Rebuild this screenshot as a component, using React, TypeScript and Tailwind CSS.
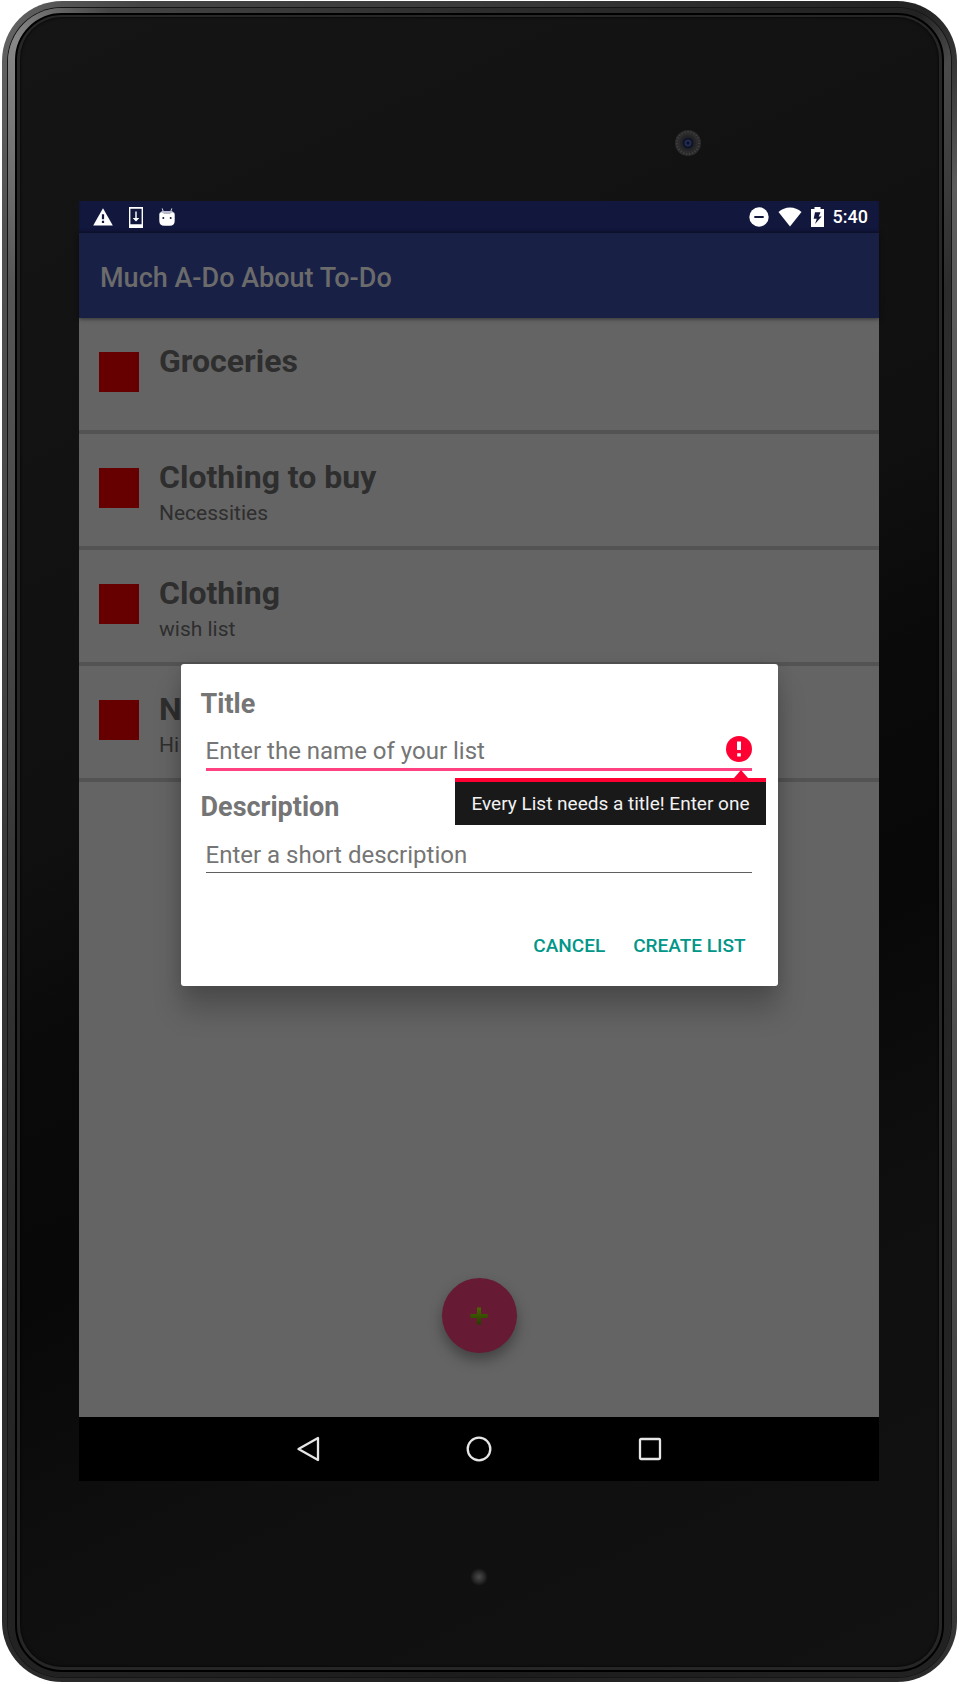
import React from "react";

type TodoList = { id: number; title: string; description: string };

const lists: TodoList[] = [
  { id: 1, title: "Groceries", description: "" },
  { id: 2, title: "Clothing to buy", description: "Necessities" },
  { id: 3, title: "Clothing", description: "wish list" },
  { id: 4, title: "N", description: "Hi" },
];

function WarningIcon() {
  return (
    <svg width="20" height="18" viewBox="0 0 20 18" aria-hidden="true">
      <path d="M10 .3 19.8 17.6H.2Z" fill="#fff" />
      <path d="M8.9 6.2h2.2v5H8.9zM8.9 12.8h2.2v2.2H8.9z" fill="#12183d" />
    </svg>
  );
}

function DownloadIcon() {
  return (
    <svg width="14" height="21" viewBox="0 0 14 21" aria-hidden="true">
      <path fillRule="evenodd" d="M0 0h14v21H0zM1.4 1.7v15.5h11.2V1.7z" fill="#fff" />
      <path d="M6.3 4.5h1.4v6.6h2.6L7 14.6l-3.3-3.5h2.6z" fill="#fff" />
    </svg>
  );
}

function AndroidIcon() {
  return (
    <svg width="16" height="18" viewBox="0 0 16 18" aria-hidden="true">
      <path d="M3.2.4 4.4 4M12.8.4 11.6 4" stroke="#d5d6e2" strokeWidth="1" />
      <path d="M2.6 3h10.8l1 2.4H1.6z" fill="#b9bbcf" />
      <path d="M.3 6.2Q.5 4 2.5 4.4q5.5 2.4 11 0 2-.4 2.2 1.8v6.6q0 5-5 5H5.3q-5 0-5-5z" fill="#fff" />
      <circle cx="4.3" cy="10" r="1" fill="#12183d" />
      <circle cx="11.7" cy="10" r="1" fill="#12183d" />
    </svg>
  );
}

function DoNotDisturbIcon() {
  return (
    <svg width="20" height="20" viewBox="0 0 20 20" aria-hidden="true">
      <circle cx="10" cy="10" r="9.7" fill="#fff" />
      <path d="M5.3 9h9.4v2H5.3z" fill="#12183d" />
    </svg>
  );
}

function WifiIcon() {
  return (
    <svg width="24" height="20" viewBox="0 0 24 20" aria-hidden="true">
      <path d="M.5 5Q5.5.5 12 .5T23.5 5L12 19.5Z" fill="#fff" />
    </svg>
  );
}

function BatteryIcon() {
  return (
    <svg width="13" height="20" viewBox="0 0 13 20" aria-hidden="true">
      <path d="M3.5 0h6v2H13v18H0V2h3.5z" fill="#fff" />
      <path d="M4 5.3h5.5L7.7 9.4h2.9L4 17l1.8-5.2H2.7z" fill="#12183d" />
    </svg>
  );
}

function StatusBar() {
  return (
    <div className="flex h-8 items-center justify-between bg-[#12183d] pr-[11px] pl-[14px] shadow-[inset_0_-2px_2px_rgba(0,0,0,0.2)]">
      <div className="flex items-center gap-4">
        <WarningIcon />
        <DownloadIcon />
        <AndroidIcon />
      </div>
      <div className="flex items-center gap-[9px] text-lg leading-8 font-medium text-white">
        <DoNotDisturbIcon />
        <WifiIcon />
        <BatteryIcon />
        <span>5:40</span>
      </div>
    </div>
  );
}

function ListRow({ item }: { item: TodoList }) {
  return (
    <li className="flex min-h-[116px] items-start gap-5 border-b-4 border-[#535353] px-5">
      <span className="mt-[34px] size-10 shrink-0 bg-[#660000]" />
      <div className="pt-[23px] text-[#2e2e2e]">
        <h2 className="text-[32px] leading-10 font-bold">{item.title}</h2>
        <p className="text-[21px] leading-8">{item.description}</p>
      </div>
    </li>
  );
}

function ErrorHint() {
  return (
    <div id="title-error" role="alert" className="absolute top-[43px] -right-[14px] border-t-4 border-[#ff0033] bg-[#191919] px-4 pt-px text-[19px] leading-[42px] whitespace-nowrap text-[#f2f2f2]">
      <svg className="absolute right-[18px] bottom-full mb-1" width="14" height="8" viewBox="0 0 14 8" aria-hidden="true">
        <path d="M7 0 14 8H0Z" fill="#ff0033" />
      </svg>
      Every List needs a title! Enter one
    </div>
  );
}

function CreateListDialog() {
  return (
    <form
      role="dialog"
      aria-label="Create list"
      onSubmit={(e) => e.preventDefault()}
      className="w-3/4 max-w-[597px] min-w-[480px] rounded-[3px] bg-white px-5 pt-6 pb-4 shadow-[0_24px_28px_rgba(0,0,0,0.22),0_2px_16px_rgba(0,0,0,0.12)]"
    >
      <label htmlFor="title" className="block text-[27px] leading-8 font-bold text-[#757575]">Title</label>
      <div className="relative mr-[6px] ml-[5px] mt-[15px]">
        <input
          id="title"
          aria-describedby="title-error"
          aria-invalid="true"
          placeholder="Enter the name of your list"
          className="block w-full border-b-3 border-[#ff4081] pr-9 pb-px text-2xl leading-8 text-[#212121] outline-none placeholder:text-[#757575]"
        />
        <svg className="absolute top-px right-0" width="26" height="26" viewBox="0 0 26 26" aria-hidden="true">
          <circle cx="13" cy="13" r="13" fill="#ff0033" />
          <path d="M11 5.5h4v8.6h-4zM11.2 17.2h3.6v3.4h-3.6z" fill="#fff" />
        </svg>
        <ErrorHint />
      </div>
      <label htmlFor="description" className="mt-5 block text-[27px] leading-8 font-bold text-[#757575]">Description</label>
      <div className="mt-4 mr-[6px] ml-[5px]">
        <input
          id="description"
          placeholder="Enter a short description"
          className="block w-full border-b border-[#5f5f5f] pb-px text-2xl leading-8 text-[#212121] outline-none placeholder:text-[#757575]"
        />
      </div>
      <div className="mt-[49px] flex justify-end gap-1 text-[19px] leading-6 font-medium text-[#009688]">
        <button type="button" className="h-12 px-3">CANCEL</button>
        <button type="submit" className="h-12 px-3">CREATE LIST</button>
      </div>
    </form>
  );
}

function NavigationBar() {
  return (
    <nav className="flex h-16 justify-center bg-black">
      <button aria-label="Back" className="flex w-[171px] items-center justify-center">
        <svg width="24" height="26" viewBox="0 0 24 26" fill="none" stroke="#e6e6e6" strokeWidth="2.3" strokeLinejoin="round" aria-hidden="true">
          <path d="M22 2v22L2.500 13Z" />
        </svg>
      </button>
      <button aria-label="Home" className="flex w-[171px] items-center justify-center">
        <svg width="26" height="26" viewBox="0 0 26 26" fill="none" stroke="#e6e6e6" strokeWidth="2.3" aria-hidden="true">
          <circle cx="13" cy="13" r="11.3" />
        </svg>
      </button>
      <button aria-label="Recent apps" className="flex w-[171px] items-center justify-center">
        <svg width="24" height="24" viewBox="0 0 24 24" fill="none" stroke="#e6e6e6" strokeWidth="2.3" aria-hidden="true">
          <rect x="2" y="2" width="20" height="20" rx="1" />
        </svg>
      </button>
    </nav>
  );
}

function Camera() {
  return (
    <svg width="28" height="28" viewBox="0 0 28 28" aria-hidden="true">
      <circle cx="14" cy="14" r="13" fill="#2b2b2b" />
      <circle cx="14" cy="14" r="11" fill="none" stroke="#444" strokeWidth="2" strokeDasharray="1 2" />
      <circle cx="14" cy="14" r="8" fill="#222429" />
      <circle cx="14" cy="14" r="5.5" fill="#11141c" />
      <circle cx="14" cy="14" r="3.5" fill="#202b58" />
      <circle cx="14" cy="14" r="1.5" fill="#0c1020" />
    </svg>
  );
}

function Screen() {
  return (
    <main className="relative flex min-h-[1280px] flex-col bg-[#646464]">
      <StatusBar />
      <header className="z-10 flex h-[85px] items-center bg-[#192046] px-[21px] pt-1 text-[27px] leading-8 font-medium text-[#6b6b6b] shadow-[0_1px_4px_rgba(0,0,0,0.5)]">
        <h1>Much A-Do About To-Do</h1>
      </header>
      <ul>
        {lists.map((item) => (
          <ListRow key={item.id} item={item} />
        ))}
      </ul>
      <div className="mt-auto flex justify-center pb-16">
        <button aria-label="Add list" className="flex size-[75px] items-center justify-center rounded-full bg-[#661a34] shadow-[0_7px_14px_rgba(0,0,0,0.35)]">
          <svg width="18" height="18" viewBox="0 0 18 18" aria-hidden="true">
            <defs>
              <linearGradient id="plus" x1="0" y1="0" x2="0" y2="1">
                <stop offset="0" stopColor="#496600" />
                <stop offset="1" stopColor="#263d00" />
              </linearGradient>
            </defs>
            <path d="M7 .5h4V7h6.7v4H11v6.5H7V11H.3V7H7z" fill="url(#plus)" />
          </svg>
        </button>
      </div>
      <NavigationBar />
      <div className="absolute inset-x-0 top-8 bottom-16 z-20 flex items-center justify-center">
        <CreateListDialog />
      </div>
    </main>
  );
}

export default function App() {
  return (
    <div className="bg-white px-[2px] pt-px pb-[2px] font-['Roboto',sans-serif]">
      <div className="rounded-[60px] bg-[conic-gradient(#3a3a3a,#222_28deg,#333_31deg,#5c5c5c_36deg,#555_90deg,#444_145deg,#2a2a2a_152deg,#202020_180deg,#2b2b2b_212deg,#3a3a3a_270deg,#505050_322deg,#626262_330deg,#444_338deg,#3a3a3a)] px-[6px] pt-[7px] pb-[5px]">
        <div className="rounded-[54px] bg-[conic-gradient(#2c2c2c,#222_28deg,#4a4a4a_31deg,#2c2c2c_40deg,#222_150deg,#1c1c1c_180deg,#222_210deg,#383838_270deg,#555_320deg,#888_330deg,#444_336deg,#2c2c2c)] px-[7px] pt-[5px] pb-[5px] shadow-[0_0_0_1px_#151515]">
          <div className="rounded-[47px] border-2 border-black bg-[#262626] px-[3px] pt-[2px] pb-[3px]">
            <div className="rounded-[42px] bg-[linear-gradient(155deg,#151515,#101010_40%,#0a0a0a_50%,#080808_62%,#0f0f0f_76%,#121212)] pr-[60px] pl-[59px] shadow-[inset_0_0_3px_#000]">
              <div className="flex h-[184px] justify-end pt-[112px] pr-[177px]">
                <Camera />
              </div>
              <Screen />
              <div className="flex h-[186px] justify-center pt-[87px]">
                <span className="size-[18px] rounded-full bg-[radial-gradient(circle,#4a4a4a,#303030_35%,transparent_70%)]" />
              </div>
            </div>
          </div>
        </div>
      </div>
    </div>
  );
}
